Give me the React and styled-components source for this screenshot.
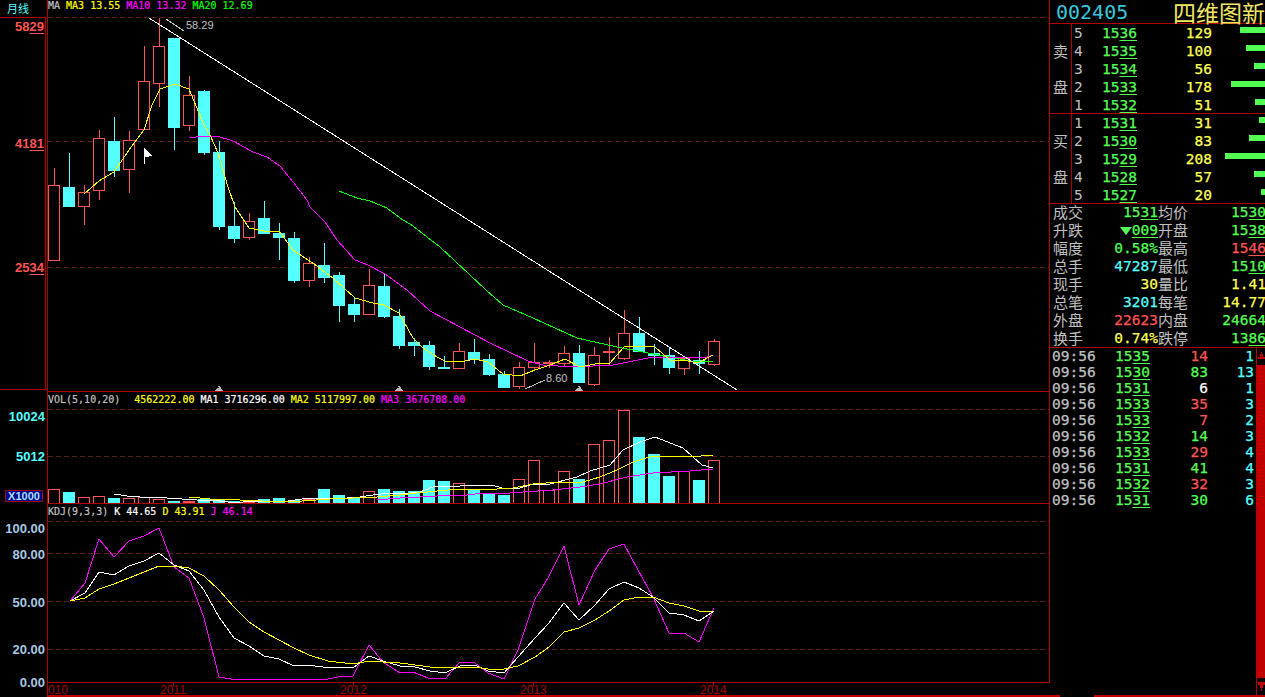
import React from "react";
import styled, { createGlobalStyle } from "styled-components";

const RED = "#ff5454";
const CYAN = "#54ffff";
const GREEN = "#54ff54";
const YELLOW = "#ffff54";
const MAGENTA = "#ff00ff";
const GRAY = "#c0c0c0";
const LINE = "#b00000";
const GRID = "#5c2222";

const MONO = `"DejaVu Sans Mono", "Liberation Mono", monospace`;
const CJK = `"Noto Sans CJK SC", "Liberation Sans", sans-serif`;

// [colour, body top, body bottom, high, low, volume bar top], one per month from x=54, 15px apart
const candles = [
    ["r", 185, 260, 168, 260, 489], ["c", 187, 206, 153, 206, 492], ["r", 192, 206, 185, 225, 497],
    ["r", 138, 190, 130, 200, 496], ["c", 141, 170, 117, 177, 498], ["r", 140, 169, 131, 193, 498],
    ["r", 81, 129, 46, 129, 497], ["r", 46, 83, 18, 107, 499], ["c", 38, 127, 38, 150, 501],
    ["r", 95, 125, 76, 131, 501], ["c", 91, 152, 90, 155, 499], ["c", 152, 226, 141, 230, 500],
    ["c", 226, 238, 202, 243, 501], ["r", 221, 237, 213, 240, 501], ["c", 218, 233, 201, 234, 499],
    ["c", 233, 237, 223, 260, 498], ["c", 238, 280, 232, 283, 500], ["r", 263, 280, 257, 287, 499],
    ["c", 265, 277, 243, 283, 489], ["c", 275, 305, 272, 322, 495], ["c", 304, 314, 298, 322, 497],
    ["r", 285, 314, 269, 315, 491], ["c", 286, 316, 273, 318, 489], ["c", 316, 345, 309, 349, 491],
    ["c", 342, 345, 338, 356, 491], ["c", 345, 366, 341, 370, 480], ["c", 367, 368, 356, 369, 481],
    ["r", 351, 368, 343, 368, 483], ["c", 352, 359, 339, 364, 490], ["c", 359, 374, 354, 376, 493],
    ["c", 374, 387, 371, 388, 495], ["r", 367, 386, 362, 389, 479], ["r", 362, 367, 343, 371, 460],
    ["r", 362, 363, 360, 368, 490], ["r", 353, 363, 346, 366, 471], ["c", 353, 382, 345, 382, 479],
    ["r", 355, 384, 347, 386, 444], ["r", 351, 352, 337, 365, 440], ["r", 333, 358, 310, 360, 410],
    ["c", 333, 351, 317, 351, 437], ["c", 353, 355, 344, 365, 454], ["c", 355, 367, 347, 374, 476],
    ["r", 358, 368, 358, 375, 471], ["c", 360, 363, 351, 374, 480], ["r", 341, 364, 339, 366, 460],
];

const ma3 = "84,194 99,181 114,172 129,150 144,130 152,105 160,89 175,84 189,89 204,125 210,135 218,153 228,187 235,207 249,228 264,231 279,231 293,250 314,264 333,278 355,298 373,303 384,305 399,313 413,338 423,348 437,357 445,361 460,362 475,359 488,362 503,374 520,376 535,370 550,365 565,359 580,367 595,364 610,363 624,347 638,346 655,347 670,360 683,360 698,363 713,355";
const ma10 = "189,138 203,136 217,136 233,141 253,152 267,157 280,166 293,182 307,200 310,207 325,222 337,240 355,260 368,265 385,274 407,290 430,311 460,327 490,343 528,361 543,365 573,367 613,365 653,357 680,358 707,357 713,355";
const ma20 = "339,191 357,198 370,201 387,208 400,218 413,226 427,237 440,247 470,275 486,290 503,305 533,318 577,338 617,347 643,352 670,357 690,361 713,361";

const volMa1 = "114,494 127,496 140,497 167,498 182,499 197,500 213,500 228,502 243,502 258,501 288,501 302,499 322,498 347,498 360,497 373,495 390,493 400,494 420,492 433,487 460,486 492,485 502,488 520,488 533,484 550,484 577,477 590,471 610,465 623,450 640,442 655,437 683,448 702,465 713,468";
const volMa2 = "189,497 210,499 240,500 262,501 302,501 330,499 377,497 400,495 417,493 437,491 460,489 497,489 513,488 533,484 560,482 583,482 600,477 617,470 633,462 653,456 677,456 690,457 713,455";
const volMa3 = "377,500 400,498 420,497 437,496 467,495 483,493 510,493 523,492 553,490 580,487 600,484 627,477 653,473 690,471 713,469";

const kdjJ = "70,601 85,583 99,539 114,557 129,541 144,536 159,528 174,567 189,578 204,618 219,677 231,679 328,679 338,677 353,676 369,645 383,662 400,673 413,672 428,678 445,679 460,662 475,663 488,673 504,679 518,650 535,599 548,578 564,546 579,605 595,570 609,549 624,544 638,570 653,597 669,633 684,633 699,642 714,608";
const kdjK = "70,601 85,593 99,572 114,575 129,566 144,561 159,553 174,565 189,571 204,590 219,617 234,638 249,646 264,656 279,659 294,666 307,665 323,667 353,668 369,656 383,661 400,666 415,667 430,671 445,673 460,666 475,665 488,671 504,673 518,657 535,638 549,623 564,603 579,620 595,605 609,589 624,582 639,588 653,597 669,613 684,615 699,621 714,611";
const kdjD = "70,601 85,598 99,589 114,584 129,578 144,572 159,566 174,566 189,568 204,576 219,590 234,607 249,622 264,632 279,640 294,648 309,655 328,661 353,664 369,661 383,662 400,663 415,665 430,667 445,668 460,667 475,667 488,669 504,669 518,666 535,657 549,647 564,632 579,628 595,620 609,611 624,600 639,597 653,597 669,603 684,606 699,611 712,611";

const sell = [[5, "15", "36", 129], [4, "15", "35", 100], [3, "15", "34", 56], [2, "15", "33", 178], [1, "15", "32", 51]];
const buy = [[1, "15", "31", 31], [2, "15", "30", 83], [3, "15", "29", 208], [4, "15", "28", 57], [5, "15", "27", 20]];
const barScale = 0.19;

const ticks = [
    ["35", 14, RED, 1], ["30", 83, GREEN, 13], ["31", 6, "#ffffff", 1], ["33", 35, RED, 3], ["33", 7, RED, 2],
    ["32", 14, GREEN, 3], ["33", 29, RED, 4], ["31", 41, GREEN, 4], ["32", 32, RED, 3], ["31", 30, GREEN, 6],
];

const GlobalStyle = createGlobalStyle`
    html, body {
        margin: 0;
        padding: 0;
        background: #000;
        overflow: hidden;
    }
`;

const Screen = styled.div`
    display: flex;
    width: 1265px;
    height: 697px;
    background: #000;
    overflow: hidden;
`;

const ChartColumn = styled.div`
    width: 1050px;
    display: flex;
    flex-direction: column;
`;

const TopRow = styled.div`
    display: flex;
    height: 17px;
    flex: none;
    border-right: 1px solid ${LINE};
`;

const PeriodCell = styled.div`
    box-sizing: border-box;
    width: 48px;
    padding: 1px 0 0 7px;
    border-right: 1px solid ${LINE};
    color: ${CYAN};
    font: 11px/14px ${CJK};
`;

const Pane = styled.div`
    display: flex;
    flex: none;
    box-sizing: border-box;
    height: ${(p) => p.$height}px;
    border-right: 1px solid ${LINE};
`;

const Axis = styled.div`
    position: relative;
    box-sizing: border-box;
    width: 48px;
    flex: none;
    border-right: 1px solid ${LINE};
`;

const PriceFrame = styled.div`
    position: relative;
    box-sizing: border-box;
    width: 46px;
    height: 373px;
    border: solid ${LINE};
    border-width: 1px 1px 1px 0;
`;

const AxisLabel = styled.div`
    position: absolute;
    right: ${(p) => p.$right || 2}px;
    top: ${(p) => p.$top}px;
    color: ${(p) => p.$color};
    font: bold 13px/14px "Liberation Sans", Arial, sans-serif;
    u {
        text-underline-offset: 2px;
    }
`;

const UnitBadge = styled.div`
    position: absolute;
    left: 5px;
    top: 98px;
    box-sizing: border-box;
    width: 38px;
    height: 12px;
    border: 1px solid #a00000;
    background: #000090;
    color: #a8e0ff;
    font: bold 11px/10px "Liberation Sans", Arial, sans-serif;
    text-align: center;
`;

const PlotStack = styled.div`
    flex: 1;
    min-width: 0;
    display: flex;
    flex-direction: column;
    border-bottom: 1px solid ${LINE};
`;

const Plot = styled.svg`
    display: block;
    flex: none;
    width: 1001px;
`;

const Legend = styled.div`
    display: flex;
    align-items: center;
    flex: none;
    gap: 6px;
    height: ${(p) => p.$height}px;
    font: 10px/1 ${MONO};
    -webkit-text-stroke: 0.2px;
    white-space: pre;
    color: ${GRAY};
`;

const Tint = styled.span`
    color: ${(p) => p.$color};
    margin-right: ${(p) => p.$gap || 0}px;
`;

const YearLabel = styled.text`
    fill: #a80000;
    font: 12px "Liberation Sans", Arial, sans-serif;
`;

const Note = styled.text`
    fill: ${GRAY};
    font: 11px "Liberation Sans", Arial, sans-serif;
`;

const XAxisRow = styled.div`
    display: flex;
    flex: none;
    height: 12px;
`;

const XAxisGutter = styled.div`
    box-sizing: border-box;
    width: 48px;
    flex: none;
    border-right: 1px solid ${LINE};
`;

const BaseLine = styled.div`
    height: 2px;
    flex: none;
    margin-left: 47px;
    background: #c00000;
`;

const SidePanel = styled.div`
    width: 215px;
    flex: none;
    display: flex;
    flex-direction: column;
    overflow: hidden;
    font: 14.5px/18px ${MONO};
    -webkit-text-stroke: 0.25px;
`;

const QuoteTitle = styled.div`
    box-sizing: border-box;
    height: 24px;
    flex: none;
    display: flex;
    align-items: center;
    justify-content: space-between;
    padding-left: 6px;
    border-bottom: 1px solid ${LINE};
`;

const StockCode = styled.span`
    color: #38c8dc;
    font: 20px/24px ${MONO};
    -webkit-text-stroke: 0;
`;

const StockName = styled.span`
    color: #f0e860;
    font: 23px/24px ${CJK};
    -webkit-text-stroke: 0;
    white-space: nowrap;
`;

const DepthBlock = styled.div`
    box-sizing: border-box;
    height: 90px;
    flex: none;
    display: flex;
    border-bottom: 1px solid ${LINE};
`;

const DepthSide = styled.div`
    box-sizing: border-box;
    width: 22px;
    flex: none;
    display: flex;
    flex-direction: column;
    align-items: center;
    justify-content: center;
    gap: 19px;
    border-right: 1px solid ${LINE};
    color: ${GRAY};
    font: 15px/17px ${CJK};
    -webkit-text-stroke: 0;
`;

const DepthRows = styled.div`
    flex: 1;
    min-width: 0;
`;

const DepthRow = styled.div`
    display: grid;
    grid-template-columns: 28px 40px 70px 1fr;
    height: 18px;
    padding-left: 2px;
`;

const DepthIndex = styled.span`
    color: ${GRAY};
    -webkit-text-stroke: 0;
`;

const Price = styled.span`
    color: ${GREEN};
    u {
        text-underline-offset: 2px;
    }
`;

const Amount = styled.span`
    color: ${(p) => p.$color || YELLOW};
    text-align: right;
`;

const BarCell = styled.span`
    display: flex;
    justify-content: flex-end;
    padding-top: 3px;
`;

const DepthBar = styled.i`
    display: block;
    height: 6px;
    background: ${GREEN};
`;

const Stats = styled.div`
    box-sizing: border-box;
    height: 145px;
    flex: none;
    margin-top: -1px;
    padding-left: 3px;
    border-bottom: 1px solid ${LINE};
`;

const StatRow = styled.div`
    display: grid;
    grid-template-columns: 30px 75px 31px 77px;
    height: 18px;
    white-space: nowrap;
`;

const StatLabel = styled.span`
    color: ${GRAY};
    font: 15px/18px ${CJK};
    -webkit-text-stroke: 0;
`;

const StatValue = styled.span`
    color: ${(p) => p.$color};
    display: flex;
    align-items: center;
    justify-content: flex-end;
    u {
        text-underline-offset: 2px;
    }
`;

const FallMark = styled.i`
    width: 0;
    height: 0;
    margin-top: 2px;
    border: solid transparent;
    border-width: 8px 6px 0;
    border-top-color: ${GREEN};
`;

const TickSection = styled.div`
    flex: 1;
    display: flex;
    min-height: 0;
`;

const TickList = styled.div`
    flex: 1;
    min-width: 0;
`;

const TickRow = styled.div`
    display: grid;
    grid-template-columns: 63px 35px 58px 46px;
    height: 16px;
    padding-left: 2px;
    line-height: 16px;
`;

const TickTime = styled.span`
    color: ${GRAY};
`;

const ScrollTrack = styled.div`
    width: 9px;
    flex: none;
    display: flex;
    flex-direction: column;
`;

const ScrollButton = styled.div`
    box-sizing: border-box;
    height: ${(p) => p.$height}px;
    flex: none;
    display: flex;
    align-items: center;
    justify-content: center;
    border-left: 1px solid ${LINE};
`;

const ScrollThumb = styled.div`
    flex: 1;
    background: #c00000;
`;

const PanelFooter = styled.div`
    height: 2px;
    flex: none;
    background: #c00000;
    padding-left: 10px;
`;

const FooterTab = styled.div`
    width: 34px;
    height: 2px;
    background: #000;
`;

function GridLines({ from, rows }) {
    return rows.map((y) => (
        <line key={y} x1={from} x2={1049} y1={y + 0.5} y2={y + 0.5} stroke={GRID} strokeDasharray="5 3" />
    ));
}

function Series({ points, color }) {
    return <polyline points={points} fill="none" stroke={color} strokeWidth="1" shapeRendering="crispEdges" />;
}

function Candle({ index, up, top, bottom, high, low }) {
    const x = 54 + index * 15;
    const color = up ? RED : CYAN;
    return (
        <g shapeRendering="crispEdges">
            <rect x={x} y={high} width="1" height={low - high} fill={color} />
            {up ? (
                <rect x={x - 5.5} y={top + 0.5} width="11" height={bottom - top} fill="#000" stroke={color} />
            ) : (
                <rect x={x - 6} y={top} width="12" height={bottom - top + 1} fill={color} />
            )}
        </g>
    );
}

function VolumeBar({ index, up, top }) {
    const x = 48 + index * 15;
    if (up) {
        return (
            <rect x={x + 0.5} y={top + 0.5} width="11" height={503 - top} fill={top > 500 ? RED : "none"} stroke={RED} shapeRendering="crispEdges" />
        );
    }
    return <rect x={x} y={top} width="12" height={503 - top} fill={CYAN} shapeRendering="crispEdges" />;
}

function EventMark({ x }) {
    return (
        <g fill="#b8b8b8" shapeRendering="crispEdges">
            <polygon points={`${x},385 ${x + 2},388 ${x + 4},391 ${x - 4},391 ${x - 2},388`} />
            <rect x={x - 3} y="387" width="3" height="1" fill="#000" />
        </g>
    );
}

function PriceChart() {
    return (
        <Plot viewBox="48 17 1001 374" height="374">
            <GridLines from={48} rows={[17, 141, 267]} />
            {candles.map(([c, top, bottom, high, low], i) => (
                <Candle key={i} index={i} up={c === "r"} top={top} bottom={bottom} high={high} low={low} />
            ))}
            <Series points={ma20} color="#00ff00" />
            <Series points={ma10} color={MAGENTA} />
            <Series points={ma3} color="#ffff00" />
            <Series points="149,18 737,390" color="#ffffff" />
            <Series points="166,19 184,31" color={GRAY} />
            <Note x="186" y="29">58.29</Note>
            <Series points="525,389 545,380" color={GRAY} />
            <Note x="546" y="382">8.60</Note>
            <EventMark x={219} />
            <EventMark x={399} />
            <EventMark x={579} />
            {/* mouse pointer caught in the screenshot */}
            <polygon points="144,148 153,156 145,157 145,164 144,164" fill="#ffffff" shapeRendering="crispEdges" />
        </Plot>
    );
}

function VolumeChart() {
    return (
        <Plot viewBox="48 408 1001 95" height="95">
            <GridLines from={48} rows={[409, 456]} />
            {candles.map(([c, , , , , top], i) => (
                <VolumeBar key={i} index={i} up={c === "r"} top={top} />
            ))}
            <Series points={volMa1} color="#ffffff" />
            <Series points={volMa2} color="#ffff00" />
            <Series points={volMa3} color={MAGENTA} />
        </Plot>
    );
}

function KdjChart() {
    return (
        <Plot viewBox="48 520 1001 162" height="162">
            <GridLines from={48} rows={[521, 553, 601, 649]} />
            <Series points={kdjJ} color={MAGENTA} />
            <Series points={kdjK} color="#ffffff" />
            <Series points={kdjD} color="#ffff00" />
        </Plot>
    );
}

function TimeAxis() {
    const years = [[48, "010", null], [160, "2011", 173], [340, "2012", 353], [520, "2013", 533], [700, "2014", 713]];
    return (
        <Plot viewBox="48 683 1001 12" height="12">
            {years.map(([x, label, tick]) => (
                <g key={label}>
                    <YearLabel x={x} y="694">{label}</YearLabel>
                    {tick && <rect x={tick} y="683" width="1" height="3" fill={LINE} />}
                </g>
            ))}
        </Plot>
    );
}

function Depth({ side, rows }) {
    return (
        <DepthBlock>
            <DepthSide>
                <span>{side}</span>
                <span>盘</span>
            </DepthSide>
            <DepthRows>
                {rows.map(([level, head, tail, qty]) => (
                    <DepthRow key={level}>
                        <DepthIndex>{level}</DepthIndex>
                        <Price>{head}<u>{tail}</u></Price>
                        <Amount>{qty}</Amount>
                        <BarCell>
                            <DepthBar style={{ width: Math.max(1, Math.round(qty * barScale)) }} />
                        </BarCell>
                    </DepthRow>
                ))}
            </DepthRows>
        </DepthBlock>
    );
}

function Stat({ label, color, children }) {
    return (
        <>
            <StatLabel>{label}</StatLabel>
            <StatValue $color={color}>{children}</StatValue>
        </>
    );
}

function App() {
    return (
        <Screen>
            <GlobalStyle />
            <ChartColumn>
                <TopRow>
                    <PeriodCell>月线</PeriodCell>
                    <Legend $height={11}>
                        <Tint $color={GRAY}>MA</Tint>
                        <Tint $color="#ffff00">MA3 13.55</Tint>
                        <Tint $color={MAGENTA}>MA10 13.32</Tint>
                        <Tint $color="#00ff00">MA20 12.69</Tint>
                    </Legend>
                </TopRow>
                <Pane $height={375}>
                    <Axis>
                        <PriceFrame>
                            <AxisLabel $right={1} $top={2} $color={RED}>58<u>29</u></AxisLabel>
                            <AxisLabel $right={1} $top={119} $color={RED}>41<u>81</u></AxisLabel>
                            <AxisLabel $right={1} $top={243} $color={RED}>25<u>34</u></AxisLabel>
                        </PriceFrame>
                    </Axis>
                    <PlotStack>
                        <PriceChart />
                    </PlotStack>
                </Pane>
                <Pane $height={112}>
                    <Axis>
                        <AxisLabel $top={18} $color={CYAN}>10024</AxisLabel>
                        <AxisLabel $top={58} $color={CYAN}>5012</AxisLabel>
                        <UnitBadge>X1000</UnitBadge>
                    </Axis>
                    <PlotStack>
                        <Legend $height={16}>
                            <Tint $color={GRAY} $gap={8}>VOL(5,10,20)</Tint>
                            <Tint $color="#ffff00">4562222.00</Tint>
                            <Tint $color="#ffffff">MA1 3716296.00</Tint>
                            <Tint $color="#ffff00">MA2 5117997.00</Tint>
                            <Tint $color={MAGENTA}>MA3 3676708.00</Tint>
                        </Legend>
                        <VolumeChart />
                    </PlotStack>
                </Pane>
                <Pane $height={179}>
                    <Axis>
                        <AxisLabel $top={18} $color="#a8c8e4">100.00</AxisLabel>
                        <AxisLabel $top={44} $color="#a8c8e4">80.00</AxisLabel>
                        <AxisLabel $top={92} $color="#a8c8e4">50.00</AxisLabel>
                        <AxisLabel $top={139} $color="#a8c8e4">20.00</AxisLabel>
                        <AxisLabel $top={172} $color="#a8c8e4">0.00</AxisLabel>
                    </Axis>
                    <PlotStack>
                        <Legend $height={16}>
                            <Tint $color={GRAY}>KDJ(9,3,3)</Tint>
                            <Tint $color="#ffffff">K 44.65</Tint>
                            <Tint $color="#ffff00">D 43.91</Tint>
                            <Tint $color={MAGENTA}>J 46.14</Tint>
                        </Legend>
                        <KdjChart />
                    </PlotStack>
                </Pane>
                <XAxisRow>
                    <XAxisGutter />
                    <TimeAxis />
                </XAxisRow>
                <BaseLine />
            </ChartColumn>
            <SidePanel>
                <QuoteTitle>
                    <StockCode>002405</StockCode>
                    <StockName>四维图新</StockName>
                </QuoteTitle>
                <Depth side="卖" rows={sell} />
                <Depth side="买" rows={buy} />
                <Stats>
                    <StatRow>
                        <Stat label="成交" color={GREEN}><span>15<u>31</u></span></Stat>
                        <Stat label="均价" color={GREEN}><span>15<u>30</u></span></Stat>
                    </StatRow>
                    <StatRow>
                        <Stat label="升跌" color={GREEN}><FallMark /><u>009</u></Stat>
                        <Stat label="开盘" color={GREEN}><span>15<u>38</u></span></Stat>
                    </StatRow>
                    <StatRow>
                        <Stat label="幅度" color={GREEN}>0.58%</Stat>
                        <Stat label="最高" color={RED}><span>15<u>46</u></span></Stat>
                    </StatRow>
                    <StatRow>
                        <Stat label="总手" color={CYAN}>47287</Stat>
                        <Stat label="最低" color={GREEN}><span>15<u>10</u></span></Stat>
                    </StatRow>
                    <StatRow>
                        <Stat label="现手" color={YELLOW}>30</Stat>
                        <Stat label="量比" color={YELLOW}>1.41</Stat>
                    </StatRow>
                    <StatRow>
                        <Stat label="总笔" color={CYAN}>3201</Stat>
                        <Stat label="每笔" color={YELLOW}>14.77</Stat>
                    </StatRow>
                    <StatRow>
                        <Stat label="外盘" color={RED}>22623</Stat>
                        <Stat label="内盘" color={GREEN}>24664</Stat>
                    </StatRow>
                    <StatRow>
                        <Stat label="换手" color={YELLOW}>0.74%</Stat>
                        <Stat label="跌停" color={GREEN}><span>13<u>86</u></span></Stat>
                    </StatRow>
                </Stats>
                <TickSection>
                    <TickList>
                        {ticks.map(([tail, qty, color, count], i) => (
                            <TickRow key={i}>
                                <TickTime>09:56</TickTime>
                                <Price>15<u>{tail}</u></Price>
                                <Amount $color={color}>{qty}</Amount>
                                <Amount $color={CYAN}>{count}</Amount>
                            </TickRow>
                        ))}
                    </TickList>
                    <ScrollTrack>
                        <ScrollButton $height={17}>
                            <svg width="7" height="9" viewBox="0 0 7 9" shapeRendering="crispEdges">
                                <path d="M3 0h1v2h1v3h2v2H0V5h2V2h1z" fill="#c00000" />
                            </svg>
                        </ScrollButton>
                        <ScrollThumb />
                        <ScrollButton $height={17}>
                            <svg width="7" height="9" viewBox="0 0 7 9" shapeRendering="crispEdges">
                                <path d="M0 0h7v3H5v3H4v3H3V6H2V3H0z" fill="#c00000" />
                            </svg>
                        </ScrollButton>
                    </ScrollTrack>
                </TickSection>
                <PanelFooter>
                    <FooterTab />
                </PanelFooter>
            </SidePanel>
        </Screen>
    );
}

export default App;
